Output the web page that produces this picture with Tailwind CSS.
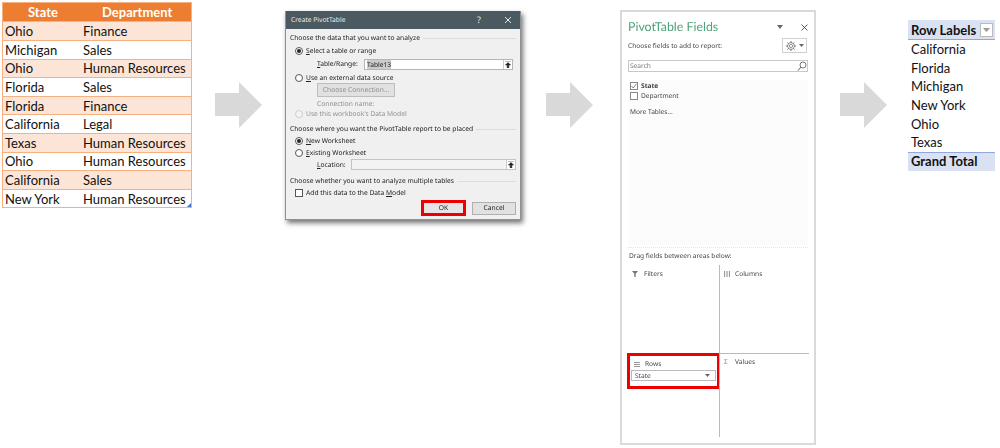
<!DOCTYPE html>
<html><head><meta charset="utf-8">
<script src="https://cdn.jsdelivr.net/npm/@tailwindcss/browser@4"></script>
</head>
<body class="bg-white">
<div class="flex items-start w-[1000px] h-[448px] overflow-hidden font-['Lato','Noto_Sans',sans-serif] text-[#111]">

<!-- source table -->
<div class="relative ml-[2px] mt-[2px] w-[190px] h-[206px] border border-[#f4b183] text-[13px] leading-[18px] flex flex-col whitespace-nowrap">
  <div class="flex h-[19px] bg-[#ed7d31] text-white font-bold items-center"><div class="w-[79px] pl-[25px]">State</div><div class="pl-[20px]">Department</div></div>
  <div class="flex h-[19px] items-center bg-[#fce4d6] border-t border-[#f4b183]"><div class="w-[80px] pl-[2px]">Ohio</div><div>Finance</div></div>
  <div class="flex h-[18.6px] items-center bg-white border-t border-[#f4b183]"><div class="w-[80px] pl-[2px]">Michigan</div><div>Sales</div></div>
  <div class="flex h-[18.6px] items-center bg-[#fce4d6] border-t border-[#f4b183]"><div class="w-[80px] pl-[2px]">Ohio</div><div>Human Resources</div></div>
  <div class="flex h-[18.6px] items-center bg-white border-t border-[#f4b183]"><div class="w-[80px] pl-[2px]">Florida</div><div>Sales</div></div>
  <div class="flex h-[18.6px] items-center bg-[#fce4d6] border-t border-[#f4b183]"><div class="w-[80px] pl-[2px]">Florida</div><div>Finance</div></div>
  <div class="flex h-[18.6px] items-center bg-white border-t border-[#f4b183]"><div class="w-[80px] pl-[2px]">California</div><div>Legal</div></div>
  <div class="flex h-[18.6px] items-center bg-[#fce4d6] border-t border-[#f4b183]"><div class="w-[80px] pl-[2px]">Texas</div><div>Human Resources</div></div>
  <div class="flex h-[18.6px] items-center bg-white border-t border-[#f4b183]"><div class="w-[80px] pl-[2px]">Ohio</div><div>Human Resources</div></div>
  <div class="flex h-[18.6px] items-center bg-[#fce4d6] border-t border-[#f4b183]"><div class="w-[80px] pl-[2px]">California</div><div>Sales</div></div>
  <div class="flex h-[18.6px] items-center bg-white border-t border-[#f4b183]"><div class="w-[80px] pl-[2px]">New York</div><div>Human Resources</div></div>
  <div class="absolute right-0 bottom-0 w-[4px] h-[4px] bg-[#4472c4] [clip-path:polygon(100%_0,100%_100%,0_100%)]"></div>
</div>

<!-- arrow 1 -->
<svg class="ml-[23px] mt-[82px] shrink-0" width="48" height="46" viewBox="0 0 48 46"><path d="M0 11H24V0L47 23 24 46V34H0Z" fill="#d9d9d9"/></svg>

<!-- dialog -->
<div class="ml-[22px] mt-[11px] w-[236px] h-[209px] shrink-0 bg-[#f0f0f0] border-x border-b border-[#8a9296] shadow-[2px_3px_5px_rgba(0,0,0,0.55)] flex flex-col font-['Noto_Sans',sans-serif] text-[6.7px] leading-[10px] text-[#222] blur-[0.3px] whitespace-nowrap [text-rendering:geometricPrecision]">
  <div class="h-[18px] bg-[#4b5a60] text-[#e8e8e8] flex items-center pl-[5px] shrink-0">
    <span class="w-[186px]">Create PivotTable</span>
    <span class="text-[9px] w-[27px]">?</span>
    <svg width="8" height="8" viewBox="0 0 8 8"><path d="M1 1L7 7M7 1L1 7" stroke="#e8e8e8" stroke-width="1"/></svg>
  </div>
  <div class="flex items-center h-[10px] mt-[4px] pl-[4px] gap-[3px]"><span>Choose the data that you want to analyze</span><div class="flex-1 h-px bg-[#dcdcdc] mr-[4px]"></div></div>
  <div class="flex items-center h-[10px] mt-[3px] pl-[9px] gap-[2px]">
    <span class="w-[8px] h-[8px] rounded-full border border-[#555] bg-white flex items-center justify-center"><span class="w-[4px] h-[4px] rounded-full bg-[#222]"></span></span><span class="ml-[1px]"><u>S</u>elect a table or range</span>
  </div>
  <div class="flex items-center h-[10px] mt-[3px] pl-[31px]">
    <span class="w-[47px]"><u>T</u>able/Range:</span>
    <div class="w-[149px] h-[11px] bg-white border border-[#b5b5b5] flex items-center justify-between pl-[2px]">
      <span class="bg-[#ccc] leading-[9px]">Table13</span>
      <span class="w-[9px] h-full border-l border-[#ccc] flex items-center justify-center"><svg width="6" height="7" viewBox="0 0 6 7"><path d="M0 0H6M3 1.5L0.5 4H2.2V7H3.8V4H5.5Z" stroke="#222" stroke-width="0.6" fill="#222"/></svg></span>
    </div>
  </div>
  <div class="flex items-center h-[10px] mt-[4px] pl-[9px] gap-[3px]">
    <span class="w-[8px] h-[8px] rounded-full border border-[#555] bg-white"></span><span><u>U</u>se an external data source</span>
  </div>
  <div class="ml-[31px] mt-0 w-[78px] h-[14px] bg-[#e1e1e1] border border-[#bdbdbd] text-[#8c8c8c] flex items-center justify-center">Choose Connection...</div>
  <div class="ml-[31px] mt-[2px] h-[10px] flex items-center text-[#8c8c8c]">Connection name:</div>
  <div class="flex items-center h-[10px] mt-0 pl-[9px] gap-[3px] text-[#909090]">
    <span class="w-[8px] h-[8px] rounded-full border border-[#ccc] bg-[#f4f4f4]"></span><span>Use this workbook's Data Model</span>
  </div>
  <div class="flex items-center h-[10px] mt-[5px] pl-[4px] gap-[3px]"><span>Choose where you want the PivotTable report to be placed</span><div class="flex-1 h-px bg-[#dcdcdc] mr-[4px]"></div></div>
  <div class="flex items-center h-[10px] mt-[2px] pl-[9px] gap-[3px]">
    <span class="w-[8px] h-[8px] rounded-full border border-[#555] bg-white flex items-center justify-center"><span class="w-[4px] h-[4px] rounded-full bg-[#222]"></span></span><span><u>N</u>ew Worksheet</span>
  </div>
  <div class="flex items-center h-[10px] mt-[2px] pl-[9px] gap-[3px]">
    <span class="w-[8px] h-[8px] rounded-full border border-[#555] bg-white"></span><span><u>E</u>xisting Worksheet</span>
  </div>
  <div class="flex items-center h-[11px] mt-[1px] pl-[31px]">
    <span class="w-[34px]"><u>L</u>ocation:</span>
    <div class="w-[165px] h-[11px] bg-[#f3f3f3] border border-[#c4c4c4] flex items-center justify-end">
      <span class="w-[9px] h-full border-l border-[#ccc] bg-white flex items-center justify-center"><svg width="6" height="7" viewBox="0 0 6 7"><path d="M0 0H6M3 1.5L0.5 4H2.2V7H3.8V4H5.5Z" stroke="#222" stroke-width="0.6" fill="#222"/></svg></span>
    </div>
  </div>
  <div class="flex items-center h-[10px] mt-[6px] pl-[4px] gap-[3px]"><span>Choose whether you want to analyze multiple tables</span><div class="flex-1 h-px bg-[#dcdcdc] mr-[4px]"></div></div>
  <div class="flex items-center h-[10px] mt-[2px] pl-[9px] gap-[3px]">
    <span class="w-[8px] h-[8px] border border-[#555] bg-white"></span><span>Add this data to the Data <u>M</u>odel</span>
  </div>
  <div class="flex justify-end items-center mt-[2px] pr-[4px] gap-[6px]">
    <div class="w-[45px] h-[16px] border-[3px] border-[#ee0000] bg-[#e6e6e6] flex items-center justify-center">OK</div>
    <div class="w-[44px] h-[13px] border border-[#b0b0b0] bg-[#e1e1e1] flex items-center justify-center">Cancel</div>
  </div>
</div>

<!-- arrow 2 -->
<svg class="ml-[25px] mt-[82px] shrink-0" width="48" height="46" viewBox="0 0 48 46"><path d="M0 11H24V0L47 23 24 46V34H0Z" fill="#d9d9d9"/></svg>

<!-- fields panel -->
<div class="ml-[26px] mt-[10px] w-[196px] h-[435px] shrink-0 border-2 border-[#d9d9d9] bg-white flex flex-col px-[6px] font-['Noto_Sans',sans-serif] text-[6.6px] leading-[10px] text-[#444] blur-[0.3px] whitespace-nowrap [text-rendering:geometricPrecision]">
  <div class="flex items-center mt-[7px] h-[16px]">
    <span class="font-['Lato',sans-serif] text-[12.4px] leading-[16px] text-[#4fa37a] w-[151px]">PivotTable Fields</span>
    <svg width="6" height="4" viewBox="0 0 6 4"><path d="M0 0H6L3 4Z" fill="#666"/></svg>
    <svg class="ml-[18px]" width="7" height="7" viewBox="0 0 7 7"><path d="M0.5 0.5L6.5 6.5M6.5 0.5L0.5 6.5" stroke="#555" stroke-width="1"/></svg>
  </div>
  <div class="flex items-center justify-between mt-[3px] h-[15px]">
    <span>Choose fields to add to report:</span>
    <div class="w-[25px] h-[15px] mr-[1px] border border-[#d0d0d0] flex items-center justify-center gap-[3px]">
      <svg width="10" height="10" viewBox="0 0 10 10"><circle cx="5" cy="5" r="1.6" fill="none" stroke="#777" stroke-width="0.8"/><circle cx="5" cy="5" r="3.4" fill="none" stroke="#777" stroke-width="0.8"/><path d="M5 0V2M5 8V10M0 5H2M8 5H10M1.5 1.5L2.8 2.8M7.2 7.2L8.5 8.5M8.5 1.5L7.2 2.8M2.8 7.2L1.5 8.5" stroke="#777" stroke-width="1"/></svg>
      <svg width="5" height="3" viewBox="0 0 5 3"><path d="M0 0H5L2.5 3Z" fill="#666"/></svg>
    </div>
  </div>
  <div class="flex items-center justify-between mt-[7px] h-[12px] border border-[#c8c8c8] pl-px text-[#777]">
    <span>Search</span>
    <svg width="10" height="10" viewBox="0 0 10 10"><circle cx="6" cy="4" r="3" fill="none" stroke="#555" stroke-width="0.8"/><path d="M4 6.2L1 9.5" stroke="#555" stroke-width="1"/></svg>
  </div>
  <div class="mt-[8px] h-[165px] bg-[#fcfcfc] flex flex-col pl-[2px] pt-px shrink-0">
    <div class="flex items-center h-[10px] gap-[3px] font-bold"><span class="w-[8px] h-[8px] border border-[#888] bg-white flex items-center justify-center"><svg width="6" height="6" viewBox="0 0 6 6"><path d="M0.5 3L2.3 5L5.5 0.8" stroke="#666" stroke-width="0.8" fill="none"/></svg></span><span>State</span></div>
    <div class="flex items-center h-[10px] gap-[3px]"><span class="w-[8px] h-[8px] border border-[#888] bg-white"></span><span>Department</span></div>
    <div class="mt-[6px] h-[10px]">More Tables...</div>
  </div>
  <div class="mt-[2px] border-t border-dotted border-[#e4e4e4] h-px shrink-0"></div>
  <div class="mt-[3px] h-[10px] pl-[1px] shrink-0">Drag fields between areas below:</div>
  <div class="mt-[4px] w-[182px] -ml-[1px] h-[173px] grid grid-cols-[93px_89px] grid-rows-[88px_84px] shrink-0">
    <div class="border-r border-[#bbb] pt-[4px] pl-[5px]"><div class="flex items-center h-[10px] gap-[5px]"><svg width="6" height="6" viewBox="0 0 6 6"><path d="M0 0H6L3.7 2.8V6H2.3V2.8Z" fill="#777"/></svg><span class="ml-px">Filters</span></div></div>
    <div class="pt-[4px] pl-[4px]"><div class="flex items-center h-[10px] gap-[5px]"><svg width="6" height="6" viewBox="0 0 6 6"><path d="M0.5 0V6M3 0V6M5.5 0V6" stroke="#999" stroke-width="1.2"/></svg><span>Columns</span></div></div>
    <div class="relative"><div class="border-[3px] border-[#ee0000] h-[36px] pt-[3px] pl-[1px] pr-[1px]"><div class="flex items-center h-[10px] gap-[5px] pl-[3px]"><svg width="6" height="5" viewBox="0 0 6 5"><path d="M0 0.5H6M0 2.5H6M0 4.5H6" stroke="#999" stroke-width="1"/></svg><span>Rows</span></div><div class="mt-[1px] h-[11px] w-[85px] border border-[#bbb] bg-white flex items-center justify-between pl-[3px] pr-[5px]"><span>State</span><svg width="5" height="3" viewBox="0 0 5 3"><path d="M0 0H5L2.5 3Z" fill="#666"/></svg></div></div><div class="absolute top-0 bottom-0 right-0 border-r border-[#bbb]"></div></div>
    <div class="border-t border-[#bbb] pt-[3px] pl-[4px]"><div class="flex items-center h-[10px] gap-[5px]"><span class="text-[#888] w-[6px]">Σ</span><span>Values</span></div></div>
  </div>
</div>

<!-- arrow 3 -->
<svg class="ml-[24px] mt-[82px] shrink-0" width="48" height="46" viewBox="0 0 48 46"><path d="M0 11H24V0L47 23 24 46V34H0Z" fill="#d9d9d9"/></svg>

<!-- pivot -->
<div class="ml-[20px] mt-[20px] w-[87px] shrink-0 flex flex-col text-[13px] leading-[18px] whitespace-nowrap">
  <div class="h-[20px] bg-[#d9e1f2] border-b border-[#8ea9db] flex items-center justify-between pl-[3px] pr-[2px] font-bold">
    <span>Row Labels</span>
    <span class="w-[13px] h-[14px] bg-white border border-[#bbb] flex items-center justify-center"><svg width="7" height="4" viewBox="0 0 7 4"><path d="M0 0H7L3.5 4Z" fill="#999"/></svg></span>
  </div>
  <div class="h-[18.6px] pl-[3px] flex items-center">California</div>
  <div class="h-[18.6px] pl-[3px] flex items-center">Florida</div>
  <div class="h-[18.6px] pl-[3px] flex items-center">Michigan</div>
  <div class="h-[18.6px] pl-[3px] flex items-center">New York</div>
  <div class="h-[18.6px] pl-[3px] flex items-center">Ohio</div>
  <div class="h-[18.6px] pl-[3px] flex items-center">Texas</div>
  <div class="h-[19px] bg-[#d9e1f2] border-t border-[#8ea9db] pl-[3px] pb-[2px] flex items-center font-bold">Grand Total</div>
</div>
</div>
</body></html>
